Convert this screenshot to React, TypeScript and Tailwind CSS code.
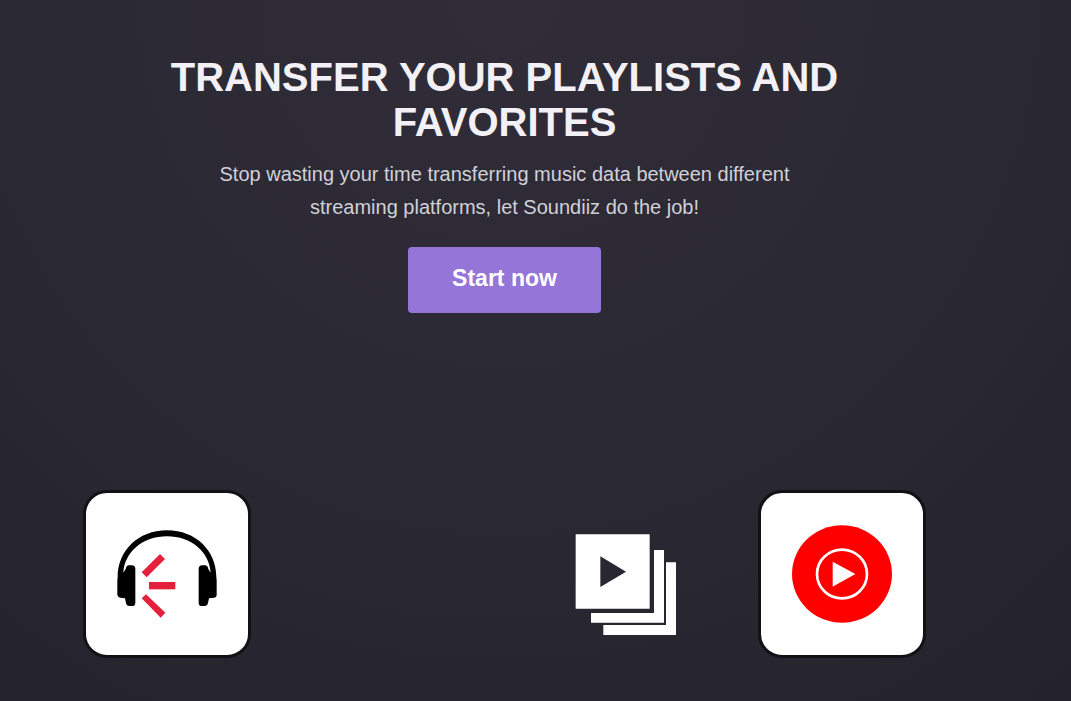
import type { ReactNode } from 'react';

function ServiceCard({ label, children }: { label: string; children: ReactNode }) {
  return (
    <div
      role="img"
      aria-label={label}
      className="flex size-[168px] shrink-0 items-center justify-center rounded-3xl border-3 border-[#121116] bg-white"
    >
      {children}
    </div>
  );
}

function HeadphonesLogo() {
  return (
    <svg viewBox="142 149 300 264" className="h-[88px] w-[100px]" aria-hidden="true">
      <path d="M144 290C144 212 205 150 292 150S440 212 440 290L441 300V343Q441 352 432 352L418 354L415 368Q413 377 404 377H396Q387 377 387 367V266Q387 255 398 255H406Q414 255 416 266L423 277C419 215 365 168 292 168S165 215 161 277L168 266Q170 255 178 255H186Q197 255 197 266V367Q197 377 187 377H180Q170 377 169 368L166 354L152 352Q143 351 143 342V300Z" />
      <g fill="#e5203c">
        <path d="M216 276L271 221L286 236L231 291Z" />
        <path d="M238 305H317V327H238Z" />
        <path d="M216 354L229 342L287 397L273 412Z" />
      </g>
    </svg>
  );
}

function PlayDiscLogo() {
  return (
    <svg viewBox="127 134 300 294" className="h-[98px] w-[100px]" aria-hidden="true">
      <ellipse cx="277" cy="281" rx="150" ry="146" fill="#f00" />
      <ellipse cx="277" cy="281" rx="75" ry="73" fill="none" stroke="#fff" strokeWidth="8" />
      <path d="M249 244L317 281L249 319Z" fill="#fff" />
    </svg>
  );
}

function PlaylistStack() {
  return (
    <svg viewBox="45 42 303 303" className="size-[101px] shrink-0" aria-hidden="true" fill="#fff">
      <path fillRule="evenodd" d="M47 43H269V266H47ZM121 109V201L198 155Z" />
      <path d="M282 90H312V308H93V279H282Z" />
      <path d="M318 127H348V345H130V315H318Z" />
    </svg>
  );
}

export default function App() {
  return (
    <main className="min-h-screen bg-[radial-gradient(circle_at_47%_0%,#302d39_0%,#2a2832_55%,#24222b_100%)] pt-[55px] pr-[62px] pb-[43px] font-['Liberation_Sans',Arial,sans-serif]">
      <section className="mx-auto flex max-w-[700px] flex-col items-center text-center">
        <h1 className="text-[40px] leading-[45px] font-bold text-[#f3f1f6] uppercase">
          Transfer your playlists and favorites
        </h1>
        <p className="mt-[13px] max-w-[600px] text-xl leading-[33px] text-[#d2d0d7]">
          Stop wasting your time transferring music data between different streaming platforms, let Soundiiz do the job!
        </p>
        <button type="button" className="mt-[23px] h-[66px] rounded bg-[#9575d8] px-11 pb-1 text-[23px] font-bold text-white">
          Start now
        </button>
      </section>
      <section aria-label="Music services" className="mx-auto mt-[177px] flex max-w-[843px] items-center">
        <ServiceCard label="Headphones">
          <HeadphonesLogo />
        </ServiceCard>
        <div className="mt-5 mr-[82px] ml-auto">
          <PlaylistStack />
        </div>
        <ServiceCard label="YouTube Music">
          <PlayDiscLogo />
        </ServiceCard>
      </section>
    </main>
  );
}
